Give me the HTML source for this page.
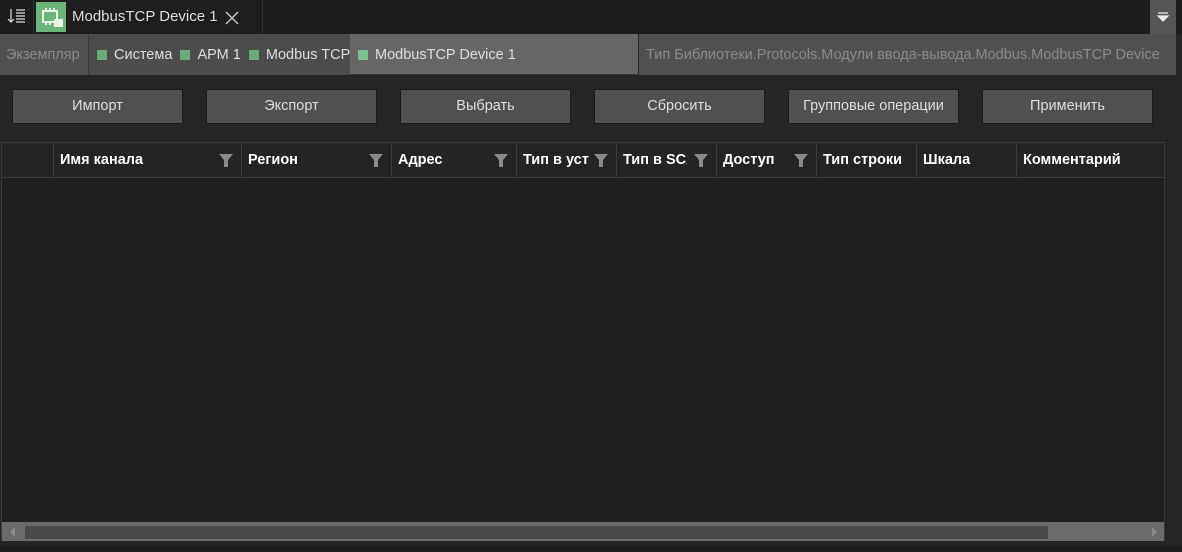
<!DOCTYPE html><html><head><meta charset="utf-8"><style>
body{margin:0;width:1182px;height:552px;background:#252525;position:relative;overflow:hidden;font-family:"Liberation Sans","DejaVu Sans",sans-serif;font-size:14px}
.a{position:absolute;box-sizing:border-box}
.btn{position:absolute;top:89px;height:33px;width:169px;background:#505050;border:1px solid #1a1a1a;color:#ddd;text-align:center;line-height:32px;font-size:14.5px}
.sq{display:inline-block;width:10px;height:10px;background:#6aab7a;margin-right:7px;vertical-align:-1px}
.h{position:absolute;top:142px;height:35px;border-right:1px solid #3c3c3c;color:#fff;font-weight:bold;font-size:14.5px;line-height:36px;padding-left:6px;box-sizing:border-box;overflow:hidden;white-space:nowrap}
.f{position:absolute;right:8px;top:11px;background:#242424}
.t{display:inline-block;overflow:hidden;vertical-align:top}
.bc{font-size:14.5px;line-height:42px}
</style></head><body>
<div class="a" style="left:0;top:0;width:1182px;height:34px;background:#1c1c1c"></div>
<div class="a" style="left:0;top:0;width:34px;height:34px;border-right:1px solid #333;text-align:center">
<svg width="20" height="18" viewBox="0 0 20 18" style="margin-top:8px"><path d="M4 1v13M1 11l3 3 3-3M9 2h9M9 5h9M9 8h9M9 11h9M9 14h9" stroke="#ddd" fill="none" stroke-width="1.2"/></svg></div>
<div class="a" style="left:35px;top:0;width:228px;height:34px;background:#1e1e1e;border-right:1px solid #333"></div>
<div class="a" style="left:36px;top:2px;width:30px;height:30px;background:#6db67b"></div>
<svg class="a" style="left:40px;top:6px" width="24" height="22"><rect x="3" y="5" width="14" height="11" fill="none" stroke="#e8f5e8" stroke-width="2"/><path d="M6 2v3M10 2v3M14 2v3M6 16v3M10 16v3" stroke="#e8f5e8" stroke-width="2"/><rect x="14" y="13" width="9" height="8" fill="#e8f5e8"/></svg>
<div class="a" style="left:72px;top:8px;color:#ddd;font-size:15px">ModbusTCP Device 1</div>
<svg class="a" style="left:224px;top:10px" width="16" height="16"><path d="M2 2l12 12M14 2L2 14" stroke="#ccc" stroke-width="1.4"/></svg>
<div class="a" style="left:1150px;top:0;width:26px;height:34px;background:#555"><svg width="26" height="34"><path d="M8 13h10M8 16h10l-5 5z" stroke="#eee" fill="#eee" stroke-width="1.2"/></svg></div>
<div class="a bc" style="left:0;top:34px;width:88px;height:41px;background:#505050;color:#8a8a8a;padding-left:6px">Экземпляр</div>
<div class="a bc" style="left:88px;top:34px;width:262px;height:41px;background:#4c4c4c;border-left:1px solid #3a3a3a;color:#ddd;padding-left:8px;white-space:nowrap;overflow:hidden"><span class="sq"></span>Система &nbsp;<span class="sq"></span>АРМ 1 &nbsp;<span class="sq"></span>Modbus TCP</div>
<div class="a bc" style="left:350px;top:34px;width:288px;height:41px;background:#666;color:#ddd;padding-left:8px;border-bottom:1px solid #333"><span class="sq" style="background:#7cc18d"></span>ModbusTCP Device 1</div>
<div class="a bc" style="left:639px;top:34px;width:537px;height:41px;background:#505050;color:#8a8a8a;padding-left:7px;white-space:nowrap;overflow:hidden">Тип Библиотеки.Protocols.Модули ввода-вывода.Modbus.ModbusTCP Device</div>
<div class="btn" style="left:12px">Импорт</div>
<div class="btn" style="left:206px">Экспорт</div>
<div class="btn" style="left:400px">Выбрать</div>
<div class="btn" style="left:594px">Сбросить</div>
<div class="btn" style="left:788px">Групповые операции</div>
<div class="btn" style="left:982px">Применить</div>
<div class="a" style="left:1px;top:142px;width:1164px;height:399px;background:#1f1f1f;border:1px solid #3a3a3a"></div>
<div class="a" style="left:1px;top:142px;width:1164px;height:36px;background:#242424;border:1px solid #3a3a3a"></div>
<div class="h" style="left:1px;width:53px"></div>
<div class="h" style="left:54px;width:188px">Имя канала<svg class="f" width="14" height="14"><path d="M0 1h14L9 7v7H5V7z" fill="#8a8a8a"/></svg></div>
<div class="h" style="left:242px;width:150px">Регион<svg class="f" width="14" height="14"><path d="M0 1h14L9 7v7H5V7z" fill="#8a8a8a"/></svg></div>
<div class="h" style="left:392px;width:125px">Адрес<svg class="f" width="14" height="14"><path d="M0 1h14L9 7v7H5V7z" fill="#8a8a8a"/></svg></div>
<div class="h" style="left:517px;width:100px"><span class="t" style="width:66px">Тип в уст</span><svg class="f" width="14" height="14"><path d="M0 1h14L9 7v7H5V7z" fill="#8a8a8a"/></svg></div>
<div class="h" style="left:617px;width:100px"><span class="t" style="width:64px">Тип в SCADA</span><svg class="f" width="14" height="14"><path d="M0 1h14L9 7v7H5V7z" fill="#8a8a8a"/></svg></div>
<div class="h" style="left:717px;width:100px">Доступ<svg class="f" width="14" height="14"><path d="M0 1h14L9 7v7H5V7z" fill="#8a8a8a"/></svg></div>
<div class="h" style="left:817px;width:100px">Тип строки</div>
<div class="h" style="left:917px;width:100px">Шкала</div>
<div class="h" style="left:1017px;width:147px;border-right:none">Комментарий</div>
<div class="a" style="left:2px;top:522px;width:1162px;height:19px;background:#6b6b6b"></div>
<div class="a" style="left:25px;top:526px;width:1023px;height:13px;background:#4a4a4a"></div>
<svg class="a" style="left:8px;top:525px" width="10" height="14"><path d="M7 2v10L2 7z" fill="#8c8c8c"/></svg>
<svg class="a" style="left:1149px;top:525px" width="10" height="14"><path d="M3 2v10l5-5z" fill="#8c8c8c"/></svg>
<div class="a" style="left:0;top:545px;width:1182px;height:7px;background:#1e1e1e"></div>
</body></html>
